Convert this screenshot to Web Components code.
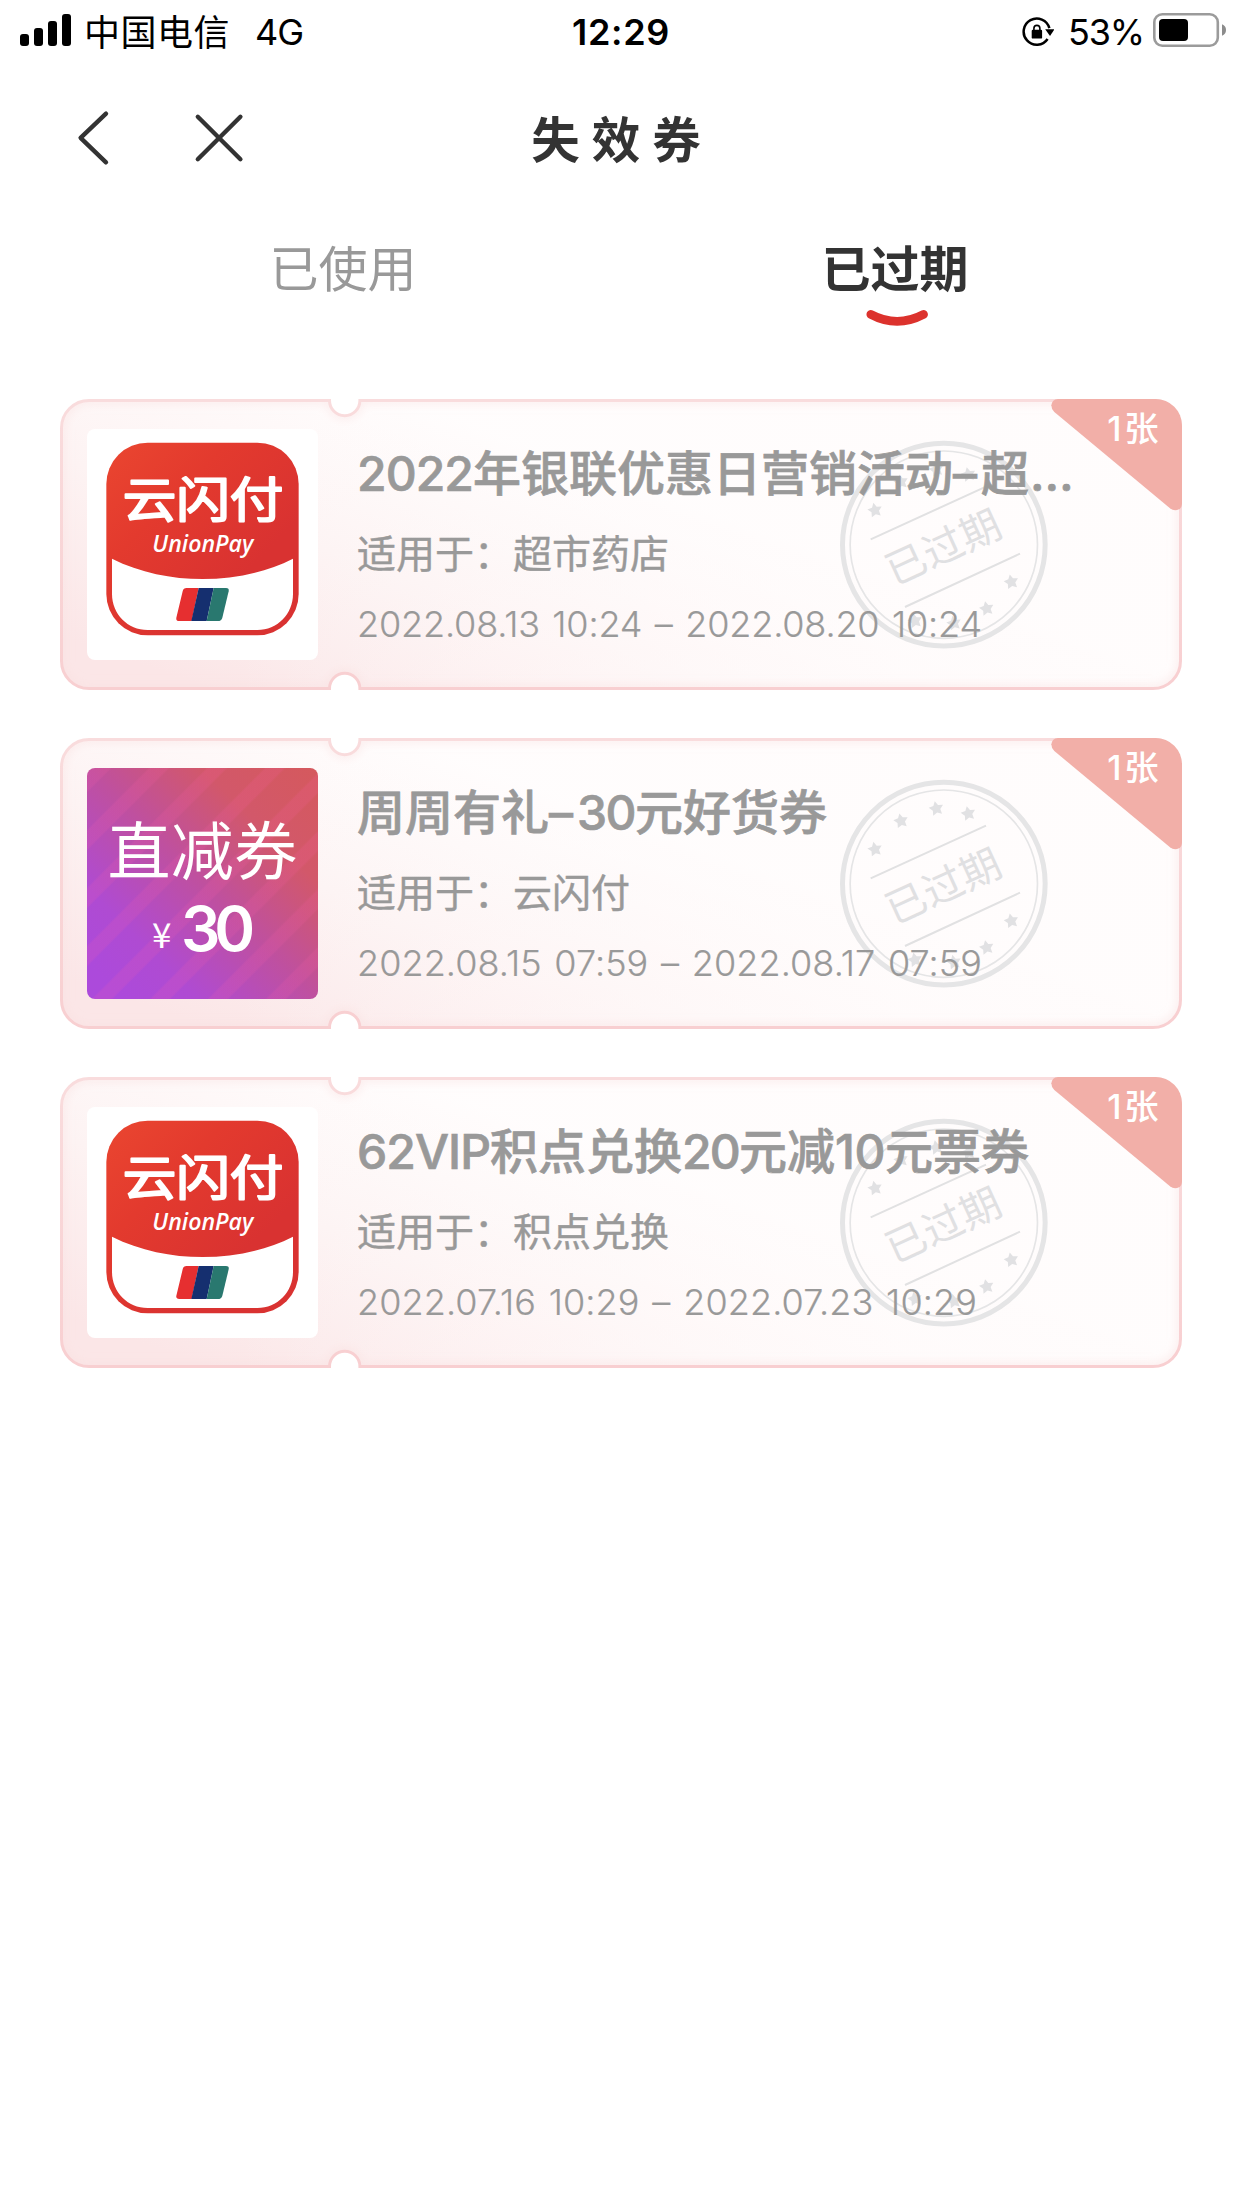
<!DOCTYPE html>
<html lang="zh-CN">
<head>
<meta charset="utf-8">
<title>失效券</title>
<style>
body{margin:0;background:#fff;width:1242px;min-height:2208px;font-family:Inter,"Noto Sans CJK SC",sans-serif;}
</style>
</head>
<body>
<coupon-page></coupon-page>
<script>
// Inline run of text set to an exact advance width by even tracking.
class TextRun extends HTMLElement{
  connectedCallback(){
    const root=this.attachShadow({mode:'open'});
    root.innerHTML='<style>:host{display:inline-block;white-space:pre;vertical-align:baseline}</style><slot></slot>';
    const w=parseFloat(this.getAttribute('w'));
    const n=[...this.textContent].length;
    this.style.letterSpacing='0px';
    const nat=this.getBoundingClientRect().width;
    if(w&&nat){this.style.letterSpacing=((w-nat)/n).toFixed(3)+'px';}
  }
}

class StatusBar extends HTMLElement{
  connectedCallback(){
    this.attachShadow({mode:'open'}).innerHTML=`
<style>
:host{display:grid;grid-template-columns:1fr auto 1fr;align-items:center;height:64px;color:#000;font-size:36px;line-height:62px}
.l,.r{display:flex;align-items:center}
.l{padding-left:20px}
.r{justify-content:flex-end;padding-right:15px}
.c{font-family:"Noto Sans CJK SC",sans-serif;margin-left:13px;line-height:58px;height:62px}
.g{margin-left:25px}
.t{font-weight:600}
svg{display:block}
.p{margin-left:14px}
.b{margin-left:9px}
</style>
<div class="l">
<svg width="51" height="64" viewBox="20 0 51 64"><rect x="20" y="34" width="9" height="12" rx="3"/><rect x="34" y="28" width="9" height="18" rx="3"/><rect x="48" y="21" width="9" height="25" rx="3"/><rect x="62" y="14" width="9" height="32" rx="3"/></svg>
<text-run class="c" w="146">中国电信</text-run><text-run class="g" w="48">4G</text-run></div>
<text-run class="t" w="98">12:29</text-run>
<div class="r">
<svg width="32" height="64" viewBox="1020 0 32 64"><path d="M1047.4 28.2A13.1 13.1 0 1 0 1045.6 39" fill="none" stroke="#000" stroke-width="2.5"/><path d="M1043.2 29.2h9.4l-4.6 6.8z"/><rect x="1029.7" y="29.8" width="10.4" height="8.8" rx="1.2"/><path d="M1031.9 31v-2.6a3 3 0 0 1 6 0V31" fill="none" stroke="#000" stroke-width="1.6"/></svg>
<text-run class="p" w="76">53%</text-run>
<svg class="b" width="74" height="64" viewBox="1153 0 74 64"><rect x="1154.3" y="14.3" width="63.5" height="31.4" rx="8" fill="none" stroke="#9b9b9b" stroke-width="2.6"/><rect x="1159" y="19" width="29" height="22" rx="4"/><path d="M1222 24.2a6.2 6.2 0 0 1 0 11.6z" fill="#8c8c8c"/></svg>
</div>`;
  }
}

class NavBar extends HTMLElement{
  connectedCallback(){
    this.attachShadow({mode:'open'}).innerHTML=`
<style>
:host{display:grid;grid-template-columns:1fr auto 1fr;align-items:center;height:150px;color:#333}
.i{display:flex;padding-left:74px;gap:80px}
h1{margin:0;font:600 48.5px/60px "Noto Sans CJK SC",sans-serif;letter-spacing:12px;padding:0 0 5px 2px}
svg{display:block;fill:none;stroke:#333;stroke-width:4.4;stroke-linecap:round;stroke-linejoin:round}
</style>
<div class="i">
<svg width="40" height="60" viewBox="74 109 40 60"><path d="M106 113.7L80.6 137.8L106 162.3"/></svg>
<svg width="50" height="60" viewBox="194 109 50 60"><path d="M197.8 116.8L240.4 159.2M240.4 116.8L197.8 159.2"/></svg>
</div>
<h1>失效券</h1><span></span>`;
  }
}

class TabBar extends HTMLElement{
  connectedCallback(){
    this.attachShadow({mode:'open'}).innerHTML=`
<style>
:host{display:flex;height:185px;padding-left:67px;font:400 49px/60px "Noto Sans CJK SC",sans-serif;color:#999}
div{width:552px;display:flex;flex-direction:column;align-items:center;padding-top:22px}
.on{color:#333;font-weight:600}
svg{display:block;margin:12px 0 0 3px}
</style>
<div><span>已使用</span></div>
<div class="on"><span>已过期</span>
<svg width="64" height="20" viewBox="865 308 64 20"><path d="M870.8 314.4Q897 328.4 923.6 314.4" fill="none" stroke="#dc322d" stroke-width="8.6" stroke-linecap="round"/></svg></div>`;
  }
}

class PayTile extends HTMLElement{
  connectedCallback(){
    this.attachShadow({mode:'open'}).innerHTML=`
<style>:host{display:block;width:231px;height:231px;border-radius:8px;overflow:hidden;background:#fff}svg{display:block}</style>
<svg width="231" height="231" viewBox="111 117 693 693">
<defs><linearGradient id="r" x1="0" y1="0" x2=".7" y2=".7"><stop offset="0" stop-color="#ea4630"/><stop offset=".45" stop-color="#e33a2e"/><stop offset="1" stop-color="#d93231"/></linearGradient></defs>
<rect x="169" y="158" width="577" height="578" rx="124" fill="url(#r)"/>
<path d="M186 506C270 548 365 567 458 567S646 548 729 506V612C729 672 682 720 622 720H293C233 720 186 672 186 612Z" fill="#fff"/>
<text x="218" y="382" textLength="482" lengthAdjust="spacingAndGlyphs" font-family="Noto Sans CJK SC, sans-serif" font-weight="400" font-size="142" fill="#fff" stroke="#fff" stroke-width="6" stroke-linejoin="round" stroke-linecap="round">云闪付</text>
<text x="307" y="486" textLength="303" lengthAdjust="spacingAndGlyphs" font-family="Open Sans, sans-serif" font-style="italic" font-weight="600" font-size="70" fill="#fff">UnionPay</text>
<path d="M410 594H446L425 693H388Q377 693 379 683L398 604Q400 594 410 594Z" fill="#e62f30"/>
<path d="M446 594H491L470 693H424Z" fill="#152f6f"/>
<path d="M491 594H528Q538 594 536 604L517 683Q514 693 504 693H470Z" fill="#29786f"/>
</svg>`;
  }
}

class DiscountTile extends HTMLElement{
  connectedCallback(){
    this.attachShadow({mode:'open'}).innerHTML=`
<style>
:host{display:flex;flex-direction:column;align-items:center;width:231px;height:231px;border-radius:8px;color:#fff;
background:repeating-linear-gradient(135deg,transparent 0 2px,rgba(255,95,170,.15) 4px 16px,transparent 18px 41px),linear-gradient(45deg,#ac4adb 8%,#af4bd2 24%,#bf509f 50%,#d2586a 75%,#d5595d)}
.a{font:400 63px/80px "Noto Sans CJK SC",sans-serif;margin-top:39px}
.b{display:flex;align-items:baseline;line-height:84px;margin-left:-4px}
.y{font-size:35px;font-family:"Noto Sans CJK SC",sans-serif;margin-right:8px;position:relative;top:-3px}
.n{font-size:62px;font-weight:600}
</style>
<text-run class="a" w="190">直减券</text-run>
<div class="b"><text-run class="y" w="21">¥</text-run><text-run class="n" w="68">30</text-run></div>`;
  }
}

class CouponCard extends HTMLElement{
  connectedCallback(){
    const star=(x,y,a)=>{
      let p='';
      for(let i=0;i<10;i++){
        const r=i%2?12:23, t=(a+i*36-90)*Math.PI/180;
        p+=(i?'L':'M')+(x+r*Math.cos(t)).toFixed(1)+' '+(y+r*Math.sin(t)).toFixed(1);
      }
      return p+'Z';
    };
    const stars=[[225,358],[303,273],[409,236],[505,251],[634,573],[560,653],[345,690],[462,697]].map(s=>star(s[0],s[1],-12)).join('');
    const shape='M29 1.5H269.5A15.2 15.2 0 0 0 299.9 1.5H1093A27.5 27.5 0 0 1 1120.5 29V262A27.5 27.5 0 0 1 1093 289.5H299.9A15.2 15.2 0 0 0 269.5 289.5H29A27.5 27.5 0 0 1 1.5 262V29A27.5 27.5 0 0 1 29 1.5Z';
    this.attachShadow({mode:'open'}).innerHTML=`
<style>
:host{display:grid;width:1122px;height:291px;color:#999}
.bg,.c{grid-area:1/1}
.bg{display:block}
.c{display:flex;gap:39px;padding:30px 0 0 27px;z-index:1}
.m{display:flex;flex-direction:column;padding-top:21px}
.t{font-size:48px;font-weight:500;line-height:48px;height:48px;white-space:nowrap;-webkit-text-stroke:.7px #999}
.s{font:400 39px/40px "Noto Sans CJK SC",sans-serif;height:40px;margin-top:33px;-webkit-text-stroke:.4px #999}
.d{font-size:36px;font-weight:300;line-height:40px;height:40px;margin:33px 0 0 0;word-spacing:2.5px;-webkit-text-stroke:.2px #999}
</style>
<svg class="bg" width="1122" height="291" viewBox="0 0 1122 291">
<defs>
<linearGradient id="f" gradientUnits="userSpaceOnUse" x1="180" y1="300" x2="290" y2="-20"><stop offset="0" stop-color="#fbe6e7"/><stop offset=".5" stop-color="#fdf3f3"/><stop offset="1" stop-color="#fffdfd"/></linearGradient>
<linearGradient id="w" x1="0" y1="0" x2="1" y2="0"><stop offset=".15" stop-color="#fffcfc" stop-opacity="0"/><stop offset=".75" stop-color="#fffcfc" stop-opacity=".8"/></linearGradient>
<linearGradient id="e" x1="0" y1="0" x2="0" y2="1"><stop offset="0" stop-color="#f9dcdd"/><stop offset="1" stop-color="#f8cfd1"/></linearGradient>
<filter id="bl" x="-5%" y="-10%" width="110%" height="120%"><feGaussianBlur stdDeviation="4"/></filter>
<clipPath id="k"><path d="${shape}"/></clipPath>
</defs>
<path d="${shape}" fill="url(#f)"/><path d="${shape}" fill="url(#w)"/>
<g clip-path="url(#k)"><path d="${shape}" fill="none" stroke="#fadfe0" stroke-opacity=".5" stroke-width="8" filter="url(#bl)"/></g>
<path d="${shape}" fill="none" stroke="url(#e)" stroke-width="3"/>
<g transform="translate(740 -8) scale(.33333)">
<g fill="none" stroke="#e5e5e6"><circle cx="431.5" cy="461" r="304" stroke-width="15"/><circle cx="431.5" cy="461" r="281" stroke-width="5"/><path stroke="#e1e1e2" stroke-width="6" d="M212 445L558 287M315 648L660 488"/></g>
<path d="${stars}" fill="#e1e1e3"/>
<text transform="translate(430 469) rotate(-24.6)" x="0" y="43" text-anchor="middle" textLength="366" font-family="Noto Sans CJK SC, sans-serif" font-weight="400" font-size="121" fill="#e0e0e2">已过期</text>
<path d="M774 24H1067A79 79 0 0 1 1146 103V336Q1146 350 1137 355Q1123 362 1110 352L763 63Q754 55 754 43Q756 25 774 24Z" fill="#f2afa8"/>
<text x="922" y="151" textLength="154" font-family="Inter, Noto Sans CJK SC, sans-serif" font-weight="500" font-size="103" fill="#fff">1张</text>
</g>
</svg>
<div class="c"><slot name="tile"></slot>
<div class="m"><div class="t"><slot name="title"></slot></div><div class="s"><slot name="scope"></slot></div><div class="d"><slot name="date"></slot></div></div></div>`;
  }
}

class CouponPage extends HTMLElement{
  connectedCallback(){
    this.attachShadow({mode:'open'}).innerHTML=`
<style>
:host{display:block;width:1242px}
main{display:flex;flex-direction:column;gap:48px;padding:0 60px}
</style>
<status-bar></status-bar><nav-bar></nav-bar><tab-bar></tab-bar>
<main>
<coupon-card><pay-tile slot="tile"></pay-tile><span slot="title"><text-run w="116">2022</text-run><text-run w="480">年银联优惠日营销活动</text-run><text-run w="28">–</text-run><text-run w="49">超</text-run><text-run w="51">…</text-run></span><text-run slot="scope" w="312">适用于：超市药店</text-run><text-run slot="date" w="625">2022.08.13 10:24 – 2022.08.20 10:24</text-run></coupon-card>
<coupon-card><discount-tile slot="tile"></discount-tile><span slot="title"><text-run w="192">周周有礼</text-run><text-run w="28">–</text-run><text-run w="58">30</text-run><text-run w="192">元好货券</text-run></span><text-run slot="scope" w="273">适用于：云闪付</text-run><text-run slot="date" w="625">2022.08.15 07:59 – 2022.08.17 07:59</text-run></coupon-card>
<coupon-card><pay-tile slot="tile"></pay-tile><span slot="title"><text-run w="133">62VIP</text-run><text-run w="192">积点兑换</text-run><text-run w="57">20</text-run><text-run w="96">元减</text-run><text-run w="50">10</text-run><text-run w="144">元票券</text-run></span><text-run slot="scope" w="312">适用于：积点兑换</text-run><text-run slot="date" w="620">2022.07.16 10:29 – 2022.07.23 10:29</text-run></coupon-card>
</main>`;
  }
}
customElements.define('text-run',TextRun);
customElements.define('status-bar',StatusBar);
customElements.define('nav-bar',NavBar);
customElements.define('tab-bar',TabBar);
customElements.define('pay-tile',PayTile);
customElements.define('discount-tile',DiscountTile);
customElements.define('coupon-card',CouponCard);
customElements.define('coupon-page',CouponPage);
</script>
</body>
</html>
